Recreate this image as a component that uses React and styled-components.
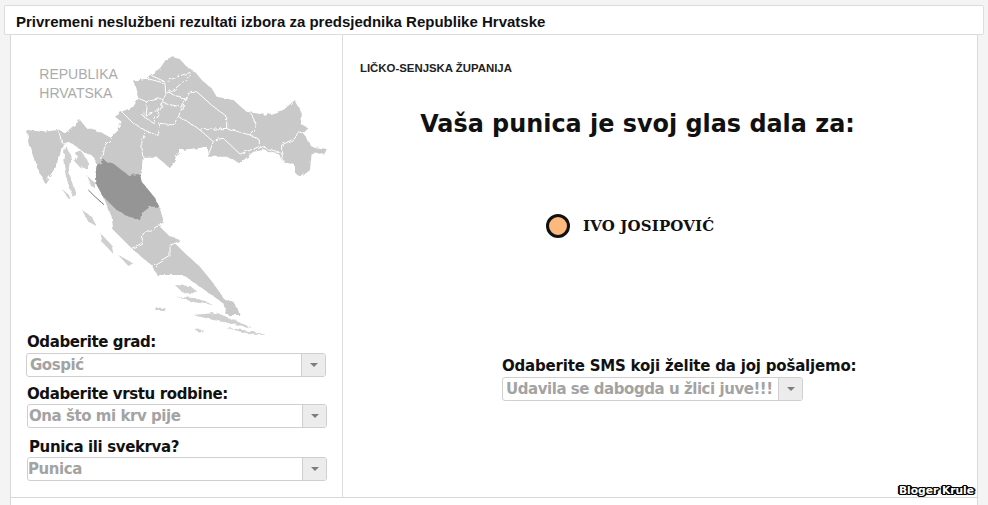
import styled, { createGlobalStyle } from "styled-components";

const GlobalStyle = createGlobalStyle`
  html, body {
    margin: 0;
    padding: 0;
    background: #f4f4f4;
  }
  #root {
    height: 505px;
    overflow: hidden;
  }
`;

const Page = styled.div`
  position: relative;
  display: flex;
  flex-direction: column;
  width: 988px;
  height: 505px;
  padding-top: 5px;
  box-sizing: border-box;
  overflow: hidden;
`;

const TitleBar = styled.h1`
  position: relative;
  z-index: 1;
  box-sizing: border-box;
  height: 30px;
  margin: 0 4px;
  padding: 7px 0 0 11px;
  background: #fff;
  border: 1px solid #dcdcdc;
  border-radius: 2px;
  font: bold 15px/18px "Liberation Sans", Arial, sans-serif;
  color: #111;
`;

const Panel = styled.div`
  box-sizing: border-box;
  display: flex;
  flex: 1;
  flex-direction: column;
  margin: 0 10px;
  background: #fff;
  border-left: 1px solid #d8d8d8;
  border-right: 1px solid #d8d8d8;
`;

const Columns = styled.div`
  display: flex;
  height: 462px;
  border-bottom: 1px solid #d8d8d8;
`;

const Side = styled.aside`
  box-sizing: border-box;
  width: 332px;
  padding-top: 16px;
  border-right: 1px solid #dcdcdc;
`;

const Map = styled.svg`
  display: block;
  width: 345px;
  height: 281px;
  margin-left: -11px;
  overflow: visible;
`;

const Fields = styled.div`
  position: relative;
  display: flex;
  flex-direction: column;
  padding-left: 15px;
`;

const Field = styled.div`
  width: 300px;
  margin-top: ${(p) => p.$top || 0}px;
  margin-left: ${(p) => p.$left || 0}px;
`;

const Label = styled.label`
  display: block;
  height: ${(p) => p.$height || 21}px;
  padding-left: ${(p) => p.$pad || 0}px;
  font: bold 15px/20px "DejaVu Sans", Verdana, sans-serif;
  letter-spacing: ${(p) => p.$spacing ?? -0.2}px;
  color: #111;
`;

const Select = styled.div`
  box-sizing: border-box;
  display: flex;
  width: ${(p) => p.$width || "300px"};
  height: 24px;
  background: #fff;
  border: 1px solid #cfcfcf;
  border-radius: 3px;
  font: bold 15px/22px "DejaVu Sans", Verdana, sans-serif;
  letter-spacing: -0.45px;
  color: #a3a3a3;
`;

const SelectText = styled.span`
  flex: 1;
  padding-left: ${(p) => p.$pad ?? 3}px;
  white-space: nowrap;
`;

const Arrow = styled.span`
  display: flex;
  align-items: center;
  justify-content: center;
  width: 23px;
  background: #ececec;
  border-left: 1px solid #cfcfcf;
  border-radius: 0 2px 2px 0;

  &::after {
    content: "";
    border-left: 4px solid transparent;
    border-right: 4px solid transparent;
    border-top: 4px solid #7d7d7d;
  }
`;

const Main = styled.main`
  flex: 1;
  position: relative;
  padding: 25px 0 0 17px;
`;

const Region = styled.h2`
  margin: 0;
  font: bold 11.4px/16px "Liberation Sans", Arial, sans-serif;
  color: #222;
`;

const Heading = styled.h3`
  margin: 32px 0 0;
  padding-right: 62px;
  text-align: center;
  font: bold 23.9px/32px "DejaVu Sans", Verdana, sans-serif;
  color: #111;
`;

const Vote = styled.div`
  display: flex;
  align-items: center;
  gap: 13px;
  margin: 74px 0 0 186px;
  font: bold 15px/24px "DejaVu Serif", Georgia, serif;
  letter-spacing: 0.15px;
  color: #111;
`;

const Dot = styled.span`
  box-sizing: border-box;
  width: 24px;
  height: 24px;
  border: 3px solid #111;
  border-radius: 50%;
  background: #fdb97d;
`;

const SmsBlock = styled.div`
  margin: 118px 0 0 142px;
`;

const Watermark = styled.span`
  position: absolute;
  right: 3px;
  bottom: 0;
  font: bold 10.7px/12px "DejaVu Sans", Verdana, sans-serif;
  color: #fff;
  text-shadow: 1px 0 #000, -1px 0 #000, 0 1px #000, 0 -1px #000, 1px 1px #000,
    -1px -1px #000, 1px -1px #000, -1px 1px #000, 2px 0 #000, -2px 0 #000;
`;

const Croatia = "M497,180 515,170 540,178 560,200 585,215 605,240 635,265 650,290 700,300 740,335 800,345 850,330 885,300 905,340 905,375 925,385 910,400 935,440 980,447 975,460 935,462 930,510 905,530 885,520 885,495 850,485 835,460 790,450 760,455 720,490 680,470 625,470 620,440 590,445 540,450 510,505 470,470 428,470 425,520 420,522 425,545 445,570 465,595 478,620 490,660 480,680 510,710 540,720 525,730 555,760 600,800 640,850 675,900 700,905 722,945 680,945 670,910 600,860 550,825 470,825 460,800 400,750 340,690 335,650 310,590 290,555 287,520 290,495 280,470 250,455 215,430 190,430 185,440 175,490 135,550 110,500 90,440 80,390 130,395 175,390 195,400 240,360 260,385 300,395 335,415 345,400 365,365 345,350 365,335 400,320 415,295 400,240 440,235 450,225 480,205Z";

const Lika = "M290,495 315,482 345,495 385,525 420,522 425,545 445,570 465,595 478,620 450,620 425,640 420,660 395,655 350,630 310,590 290,555 287,520Z";

const Borders = [
  "175,390 187,430",
  "335,415 310,440 305,480",
  "365,335 400,370 440,395 470,405",
  "435,395 425,430 428,470",
  "470,405 480,370 520,375 535,350 580,375 600,390 680,385",
  "535,350 565,280 590,275 640,320 680,350 680,385",
  "600,390 640,425 625,465",
  "640,420 670,415 720,462 778,440 845,458 850,485",
  "680,385 750,405 778,420 778,440",
  "750,405 770,375 750,335",
  "845,458 845,435 885,415 895,395 910,400",
  "400,240 440,235 495,250 497,280 510,280 575,222",
  "450,225 495,245 560,220 585,215",
  "510,280 560,300 565,280",
  "415,295 440,305 485,295 495,280",
  "440,305 435,345 460,340 490,310 485,295",
  "425,345 460,368 490,310 540,320",
  "395,745 425,730 430,700 460,685 480,675",
  "460,800 510,770 510,735 540,725",
];

const Islands = [
  "195,435 215,470 208,520 228,585 218,590 198,530 190,480",
  "222,482 240,450 268,490 262,505 240,502",
  "262,528 285,548 285,565 270,555",
  "186,566 212,590 206,598",
  "246,630 275,650 292,682 265,665",
  "300,698 335,735 340,762 310,730",
  "355,765 400,790 385,798",
  "525,855 570,858 596,878 550,880",
  "530,890 590,895 640,915 580,906",
  "465,925 495,922 490,932 470,933",
  "580,945 650,938 760,985 700,972 640,960",
  "670,982 730,990 800,1004 760,1004",
  "585,990 610,988 600,998",
];

const Dropdown = ({ value, pad, width }) => (
  <Select $width={width}>
    <SelectText $pad={pad}>{value}</SelectText>
    <Arrow />
  </Select>
);

export default function App() {
  return (
    <Page>
      <GlobalStyle />
      <TitleBar>Privremeni neslužbeni rezultati izbora za predsjednika Republike Hrvatske</TitleBar>
      <Panel>
        <Columns>
          <Side>
            <Map viewBox="0 153 1035 843" aria-label="Karta Hrvatske">
              <defs>
                <filter id="rough" x="-5%" y="-5%" width="110%" height="110%">
                  <feTurbulence type="fractalNoise" baseFrequency="0.06" numOctaves="2" seed="4" />
                  <feDisplacementMap in="SourceGraphic" scale="14" />
                </filter>
              </defs>
              <text x="118" y="238" fontFamily="Liberation Sans, Arial, sans-serif" fontSize="42" fill="#ababab">REPUBLIKA</text>
              <text x="118" y="293" fontFamily="Liberation Sans, Arial, sans-serif" fontSize="42" fill="#ababab">HRVATSKA</text>
              <g filter="url(#rough)">
                <path d={Croatia} fill="#c9c9c9" />
                {Islands.map((p) => (
                  <polygon key={p} points={p} fill="#cfcfcf" />
                ))}
                {Borders.map((p) => (
                  <polyline key={p} points={p} fill="none" stroke="#fff" strokeWidth="3" />
                ))}
                <path d={Lika} fill="#959595" />
                <polyline points="265,570 285,590 310,612" fill="none" stroke="#777" strokeWidth="3" />
              </g>
            </Map>
            <Fields>
              <Field $left={1}>
                <Label $spacing={-0.38}>Odaberite grad:</Label>
              </Field>
              <Field>
                <Dropdown value="Gospić" />
              </Field>
              <Field $top={7} $left={1}>
                <Label $spacing={-0.38} $height={20}>Odaberite vrstu rodbine:</Label>
                <Dropdown value="Ona što mi krv pije" pad={1} />
              </Field>
              <Field $top={9} $left={1}>
                <Label $spacing={-0.38} $height={20} $pad={2}>Punica ili svekrva?</Label>
                <Dropdown value="Punica" pad={0} />
              </Field>
            </Fields>
          </Side>
          <Main>
            <Region>LIČKO-SENJSKA ŽUPANIJA</Region>
            <Heading>Vaša punica je svoj glas dala za:</Heading>
            <Vote>
              <Dot />
              IVO JOSIPOVIĆ
            </Vote>
            <SmsBlock>
              <Label as="div">Odaberite SMS koji želite da joj pošaljemo:</Label>
              <Dropdown value="Udavila se dabogda u žlici juve!!!" width="301px" />
            </SmsBlock>
            <Watermark>Bloger Krule</Watermark>
          </Main>
        </Columns>
      </Panel>
    </Page>
  );
}
